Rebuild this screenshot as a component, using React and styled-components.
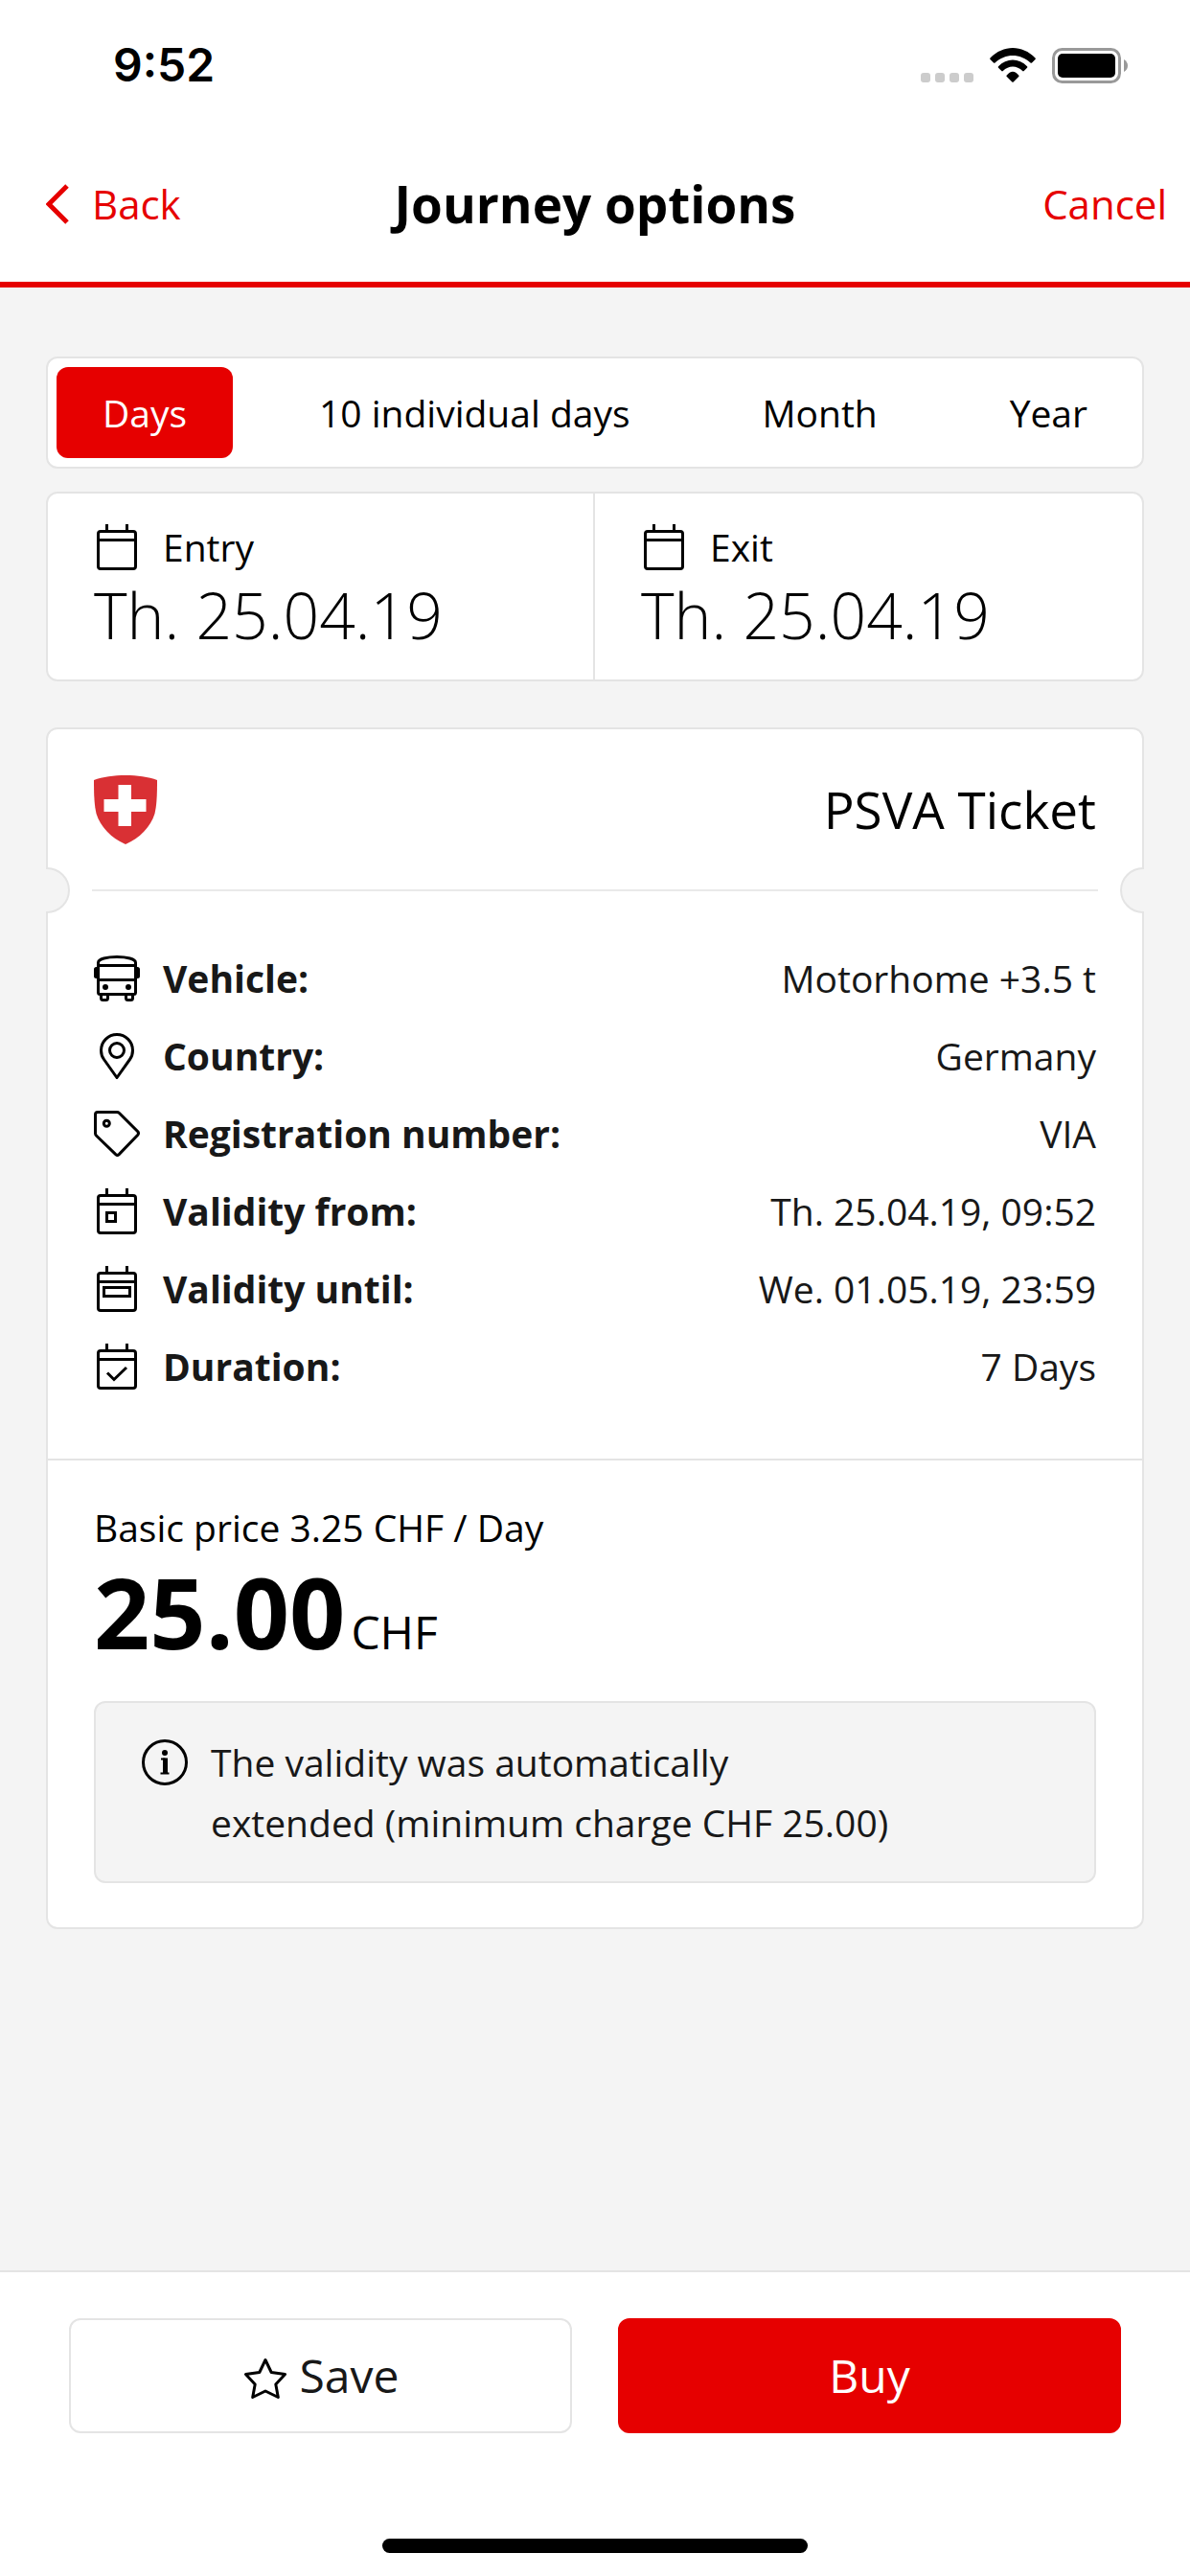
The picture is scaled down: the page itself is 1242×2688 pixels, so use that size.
import React, { useState } from "react";
import styled, { createGlobalStyle } from "styled-components";

const GlobalStyle = createGlobalStyle`
  * {
    box-sizing: border-box;
  }
  body {
    margin: 0;
    background: #fff;
    color: #000;
    font-family: "Open Sans", "Noto Sans", sans-serif;
    font-size: 39px;
    line-height: 48px;
  }
  button {
    font: inherit;
    color: inherit;
    background: none;
    border: none;
    margin: 0;
    padding: 0;
    cursor: pointer;
  }
`;

const Page = styled.div`
  display: flex;
  flex-direction: column;
  min-height: 100vh;
`;

const StatusBar = styled.div`
  display: flex;
  align-items: center;
  justify-content: space-between;
  height: 132px;
  padding: 4px 65px 0 118px;
`;

const Time = styled.span`
  font-family: Inter, "Liberation Sans", sans-serif;
  font-size: 48px;
  font-weight: 600;
`;

const StatusIcons = styled.div`
  display: flex;
  align-items: center;
  gap: 17px;
`;

const Nav = styled.header`
  display: grid;
  grid-template-columns: 1fr auto 1fr;
  align-items: center;
  height: 168px;
  padding: 0 24px 0 48px;
  border-bottom: 6px solid #e60000;
`;

const NavButton = styled.button`
  display: flex;
  align-items: center;
  gap: 24px;
  justify-self: ${(p) => p.$side};
  color: #e60000;
  font-size: 42px;
`;

const Title = styled.h1`
  margin: 0;
  padding-right: 24px;
  font-size: 53px;
  font-weight: 700;
  line-height: 72px;
`;

const Main = styled.main`
  flex: 1;
  padding: 72px 48px;
  background: #f4f4f4;
`;

const Panel = styled.section`
  background: #fff;
  border: 2px solid #e4e4e4;
  border-radius: 12px;
`;

const Tabs = styled(Panel)`
  display: flex;
  justify-content: space-between;
  padding: 9px;
`;

const Tab = styled.button`
  height: 95px;
  padding: 0 48px;
  border-radius: 12px;
  background: ${(p) => (p.$active ? "#e60000" : "transparent")};
  color: ${(p) => (p.$active ? "#fff" : "#000")};
`;

const Dates = styled(Panel)`
  display: grid;
  grid-template-columns: 1fr 1fr;
  margin: 24px 0 48px;
`;

const DateField = styled.button`
  padding: 32px 48px 22px;
  text-align: left;

  &:first-child {
    border-right: 2px solid #e4e4e4;
  }
`;

const DateLabel = styled.span`
  display: flex;
  align-items: center;
  gap: 24px;
`;

const DateValue = styled.span`
  display: block;
  font-size: 66px;
  font-weight: 300;
  line-height: 92px;
`;

const Ticket = styled(Panel)`
  position: relative;
`;

const TicketHeader = styled.div`
  display: flex;
  align-items: center;
  justify-content: space-between;
  margin: 0 46px;
  padding: 48px 2px 47px;
  border-bottom: 2px solid #e9e9e9;
`;

const TicketTitle = styled.h2`
  margin: 0;
  font-size: 53px;
  font-weight: 400;
  line-height: 72px;
`;

/* half circle punched out of the ticket edge */
const Notch = styled.span`
  position: absolute;
  top: 144px;
  ${(p) => p.$side}: -2px;
  width: 25px;
  height: 48px;
  background: #f4f4f4;
  border: 2px solid #e4e4e4;
  border-${(p) => p.$side}: none;
  border-radius: ${(p) => (p.$side === "left" ? "0 24px 24px 0" : "24px 0 0 24px")};
`;

const Details = styled.dl`
  display: flex;
  flex-direction: column;
  gap: 33px;
  margin: 0;
  padding: 67px 48px 72px;
  color: #181818;
`;

const Detail = styled.div`
  display: flex;
  justify-content: space-between;

  dt {
    display: flex;
    gap: 24px;
    font-weight: 700;
  }
  dd {
    margin: 0;
  }
`;

const Price = styled.div`
  padding: 48px 48px 46px;
  border-top: 2px solid #e4e4e4;
`;

const BasicPrice = styled.p`
  margin: 0;
  line-height: 44px;
`;

const Total = styled.p`
  display: flex;
  align-items: baseline;
  gap: 6px;
  margin: 0 0 27px;
  font-size: 48px;

  strong {
    font-size: 102px;
    font-weight: 700;
    line-height: 132px;
  }
`;

const Info = styled.div`
  display: flex;
  gap: 24px;
  padding: 30px 48px;
  background: #f4f4f4;
  border: 2px solid #e4e4e4;
  border-radius: 12px;
  color: #181818;
  line-height: 63px;

  svg {
    margin-top: 8px;
  }
  p {
    margin: 0;
  }
`;

const Footer = styled.footer`
  padding: 48px 72px 24px;
  border-top: 2px solid #e4e4e4;
`;

const Actions = styled.div`
  display: grid;
  grid-template-columns: 1fr 1fr;
  gap: 48px;
`;

const Action = styled.button`
  display: flex;
  align-items: center;
  justify-content: center;
  gap: 12px;
  height: 120px;
  border: 2px solid ${(p) => (p.$primary ? "#e60000" : "#e4e4e4")};
  border-radius: 12px;
  background: ${(p) => (p.$primary ? "#e60000" : "#fff")};
  color: ${(p) => (p.$primary ? "#fff" : "#181818")};
  font-size: 48px;
`;

const HomeIndicator = styled.div`
  width: 444px;
  max-width: 100%;
  height: 15px;
  margin: 110px auto 0;
  border-radius: 8px;
  background: #000;
`;

const Svg = styled.svg`
  flex: none;
  display: block;
  fill: none;
  stroke: #000;
  stroke-width: 3;
`;

function Icon({ children }) {
  return (
    <Svg width="48" height="48" viewBox="0 0 48 48" aria-hidden="true">
      {children}
    </Svg>
  );
}

function CalendarIcon({ children }) {
  return (
    <Icon>
      <rect x="4.5" y="7.5" width="39" height="39" rx="2.5" />
      <path d="M4.5 16.5H43.5M13.5 0V7M34.5 0V7" />
      {children}
    </Icon>
  );
}

function BusIcon() {
  return (
    <Icon>
      <path d="M4.5 38.5V7.5C4.5 3.5 14 1.5 24 1.5S43.5 3.5 43.5 7.5V38.5q0 2-2 2H6.5q-2 0-2-2Z" />
      <path d="M4.5 10.5H43.5M4.5 25.5H43.5" />
      <path d="M7.5 41v3.5q0 2 2 2h3q2 0 2-2V41M33.5 41v3.5q0 2 2 2h3q2 0 2-2V41" />
      <path
        d="M4.5 12H2.5Q0 12 0 14.5V21.5Q0 24 2.5 24H4.5ZM43.5 12H45.5Q48 12 48 14.5V21.5Q48 24 45.5 24H43.5Z"
        fill="#000"
        stroke="none"
      />
      <circle cx="12" cy="33" r="3" fill="#000" stroke="none" />
      <circle cx="36" cy="33" r="3" fill="#000" stroke="none" />
    </Icon>
  );
}

function PinIcon() {
  return (
    <Icon>
      <path
        d="M24 46.5L10.5 27.5C8.5 24.8 7.5 21.5 7.5 18a16.5 16.5 0 0 1 33 0c0 3.5-1 6.8-3 9.5Z"
        strokeLinejoin="round"
      />
      <circle cx="24" cy="18" r="7.5" />
    </Icon>
  );
}

function TagIcon() {
  return (
    <Icon>
      <path d="M4 1.5H24q1.5 0 2.5 1L45.8 21.8q1.4 1.7 0 3.4L26.2 45.6q-1.7 1.5-3.4 0L2.5 26q-1-1-1-2.5V4q0-2.5 2.5-2.5Z" />
      <circle cx="13.3" cy="13.3" r="3" />
    </Icon>
  );
}

function InfoIcon() {
  return (
    <Icon>
      <circle cx="24" cy="24" r="22.5" />
      <circle cx="24" cy="14" r="3" fill="#000" stroke="none" />
      <path d="M20 20.5H24.5M19.5 35.5H28.5" strokeWidth="2" />
      <path d="M24.5 19.5V35.5" strokeWidth="5" />
    </Icon>
  );
}

function StarIcon() {
  return (
    <Icon>
      <path
        d="M24 7.5L30.2 20.5L44.5 22.5L34.8 33L37.3 46.5L24 40L10.7 46.5L13.2 33L3.5 22.5L17.8 20.5Z"
        strokeLinejoin="round"
      />
    </Icon>
  );
}

function ShieldIcon() {
  return (
    <svg width="66" height="72" viewBox="0 0 66 72" aria-hidden="true">
      <path
        d="M0 5C9 1.5 21 0 33 0S57 1.5 66 5C66 22 65.5 31 63.5 40C59 54 48 65.5 33 72C18 65.5 7 54 2.5 40C.5 31 0 22 0 5Z"
        fill="#d93034"
      />
      <path d="M25.5 10H39V25H54.5V38H39V53H25.5V38H10.5V25H25.5Z" fill="#fff" />
    </svg>
  );
}

function SignalIcon() {
  return (
    <svg width="55" height="36" viewBox="0 0 55 36" fill="#ccc" aria-hidden="true">
      <rect x="0" y="26" width="10" height="10" rx="3" />
      <rect x="15" y="26" width="10" height="10" rx="3" />
      <rect x="30" y="26" width="10" height="10" rx="3" />
      <rect x="45" y="26" width="10" height="10" rx="3" />
    </svg>
  );
}

function WifiIcon() {
  return (
    <svg width="48" height="36" viewBox="0 0 48 36" aria-hidden="true">
      <path d="M.5 10.5C14-3.5 34-3.5 47.5 10.5q.8.8 0 1.5L44 15.5q-.7.7-1.5 0C32 5.5 16 5.5 5.5 15.5q-.8.7-1.5 0L.5 12q-.7-.7 0-1.5Z" />
      <path d="M9 19.3C17.5 10.3 30.5 10.3 39 19.3q.8.8 0 1.5l-3.3 3.3q-.7.7-1.5 0C28.3 18 19.7 18 13.8 24.1q-.8.7-1.5 0L9 20.8q-.7-.7 0-1.5Z" />
      <path d="M17.8 28.5C21.5 23.4 26.5 23.4 30.2 28.5q.8.8 0 1.5L24.7 35.5q-.7.7-1.4 0L17.8 30q-.8-.8 0-1.5Z" />
    </svg>
  );
}

function BatteryIcon() {
  return (
    <svg width="79" height="37" viewBox="0 0 79 37" aria-hidden="true">
      <rect x="1.5" y="1.5" width="69" height="34" rx="9" fill="none" stroke="#999" strokeWidth="3" />
      <rect x="6" y="6" width="60" height="25" rx="5" />
      <path d="M75 12Q79 14.5 79 18.5T75 25Z" fill="#999" />
    </svg>
  );
}

function BackIcon() {
  return (
    <svg width="24" height="42" viewBox="0 0 24 42" aria-hidden="true">
      <path d="M22 2L3 21L22 40" fill="none" stroke="#e60000" strokeWidth="5" />
    </svg>
  );
}

const tabs = ["Days", "10 individual days", "Month", "Year"];

const details = [
  { label: "Vehicle:", value: "Motorhome +3.5 t", icon: <BusIcon /> },
  { label: "Country:", value: "Germany", icon: <PinIcon /> },
  { label: "Registration number:", value: "VIA", icon: <TagIcon /> },
  {
    label: "Validity from:",
    value: "Th. 25.04.19, 09:52",
    icon: (
      <CalendarIcon>
        <rect x="13.5" y="25.5" width="9" height="9" />
      </CalendarIcon>
    ),
  },
  {
    label: "Validity until:",
    value: "We. 01.05.19, 23:59",
    icon: (
      <CalendarIcon>
        <rect x="10.5" y="22.5" width="27" height="9" />
      </CalendarIcon>
    ),
  },
  {
    label: "Duration:",
    value: "7 Days",
    icon: (
      <CalendarIcon>
        <path d="M14 30.5L21 37.5L34 25" />
      </CalendarIcon>
    ),
  },
];

function App() {
  const [active, setActive] = useState("Days");

  return (
    <Page>
      <GlobalStyle />
      <StatusBar>
        <Time>9:52</Time>
        <StatusIcons>
          <SignalIcon />
          <WifiIcon />
          <BatteryIcon />
        </StatusIcons>
      </StatusBar>
      <Nav>
        <NavButton type="button" $side="start">
          <BackIcon />
          Back
        </NavButton>
        <Title>Journey options</Title>
        <NavButton type="button" $side="end">
          Cancel
        </NavButton>
      </Nav>

      <Main>
        <Tabs>
          {tabs.map((tab) => (
            <Tab
              key={tab}
              type="button"
              $active={tab === active}
              aria-pressed={tab === active}
              onClick={() => setActive(tab)}
            >
              {tab}
            </Tab>
          ))}
        </Tabs>

        <Dates>
          <DateField type="button">
            <DateLabel>
              <CalendarIcon />
              Entry
            </DateLabel>
            <DateValue>Th. 25.04.19</DateValue>
          </DateField>
          <DateField type="button">
            <DateLabel>
              <CalendarIcon />
              Exit
            </DateLabel>
            <DateValue>Th. 25.04.19</DateValue>
          </DateField>
        </Dates>

        <Ticket>
          <TicketHeader>
            <ShieldIcon />
            <TicketTitle>PSVA Ticket</TicketTitle>
          </TicketHeader>
          <Notch $side="left" />
          <Notch $side="right" />
          <Details>
            {details.map(({ label, value, icon }) => (
              <Detail key={label}>
                <dt>
                  {icon}
                  {label}
                </dt>
                <dd>{value}</dd>
              </Detail>
            ))}
          </Details>
          <Price>
            <BasicPrice>Basic price 3.25 CHF / Day</BasicPrice>
            <Total>
              <strong>25.00</strong>
              <span>CHF</span>
            </Total>
            <Info>
              <InfoIcon />
              <p>
                The validity was automatically
                <br />
                extended (minimum charge CHF 25.00)
              </p>
            </Info>
          </Price>
        </Ticket>
      </Main>

      <Footer>
        <Actions>
          <Action type="button">
            <StarIcon />
            Save
          </Action>
          <Action type="button" $primary>
            Buy
          </Action>
        </Actions>
        <HomeIndicator />
      </Footer>
    </Page>
  );
}

export default App;
